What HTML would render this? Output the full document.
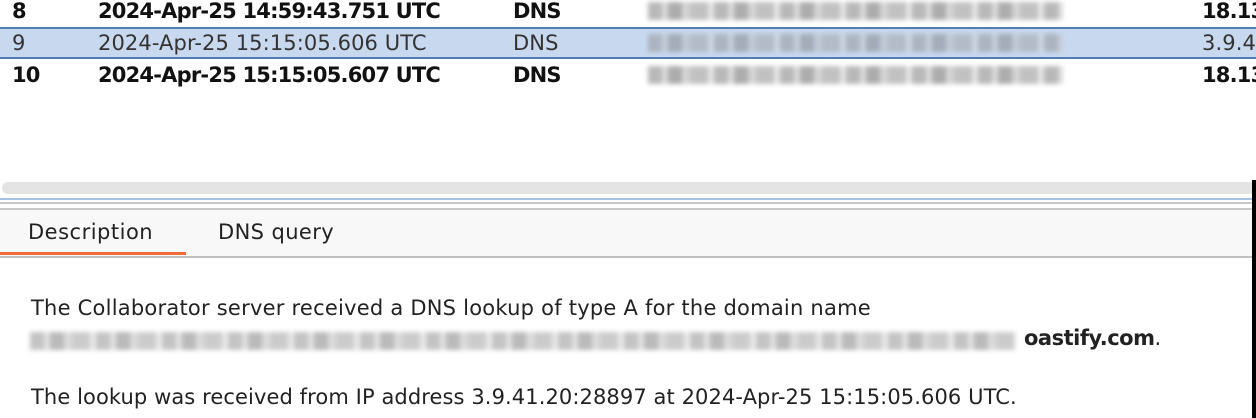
<!DOCTYPE html>
<html><head><style>
body{margin:0;width:1256px;height:418px;overflow:hidden;background:#fff;font-family:"DejaVu Sans","Liberation Sans",sans-serif;color:#111;position:relative}
.a{position:absolute;white-space:nowrap}
.row{position:absolute;left:0;width:1256px;height:31px;font-size:21px;line-height:31px;overflow:hidden}
.b{font-weight:bold;letter-spacing:-0.8px}
.n{letter-spacing:0.1px;color:#333}
.blur{position:absolute;background:repeating-linear-gradient(90deg,#8a8a8a 0 14px,#c4c4c4 14px 20px,#777 20px 34px,#b8b8b8 34px 42px,#999 42px 60px,#d4d4d4 60px 66px);filter:blur(2.5px);opacity:.6}
.t{font-size:21px;color:#222;letter-spacing:0.1px}
</style></head><body>
<div class="row b" style="top:-4px"><span class="a" style="left:12px">8</span><span class="a" style="left:98px">2024-Apr-25 14:59:43.751 UTC</span><span class="a" style="left:513px">DNS</span><span class="a" style="left:1202px">18.13</span></div>
<div class="row n" style="top:27px;height:32px;background:#c8d8ee;border-top:2px solid #4f7db4;border-bottom:2px solid #4f7db4;box-sizing:border-box;line-height:28px"><span class="a" style="left:12px">9</span><span class="a" style="left:98px">2024-Apr-25 15:15:05.606 UTC</span><span class="a" style="left:513px">DNS</span><span class="a" style="left:1202px">3.9.4</span></div>
<div class="row b" style="top:60px"><span class="a" style="left:12px">10</span><span class="a" style="left:98px">2024-Apr-25 15:15:05.607 UTC</span><span class="a" style="left:513px">DNS</span><span class="a" style="left:1202px">18.13</span></div>
<div class="blur" style="left:648px;top:2px;width:415px;height:18px"></div>
<div class="blur" style="left:648px;top:34px;width:415px;height:18px;opacity:.45"></div>
<div class="blur" style="left:648px;top:66px;width:415px;height:18px"></div>
<div class="a" style="left:2px;top:182px;width:1254px;height:12px;background:#e4e4e4;border-radius:6px"></div>
<div class="a" style="left:0;top:198px;width:1256px;height:2px;background:#a8c4e4"></div>
<div class="a" style="left:0;top:202px;width:1256px;height:2px;background:#c8c8c8"></div>
<div class="a" style="left:0;top:208px;width:1256px;height:2px;background:#c8c8c8"></div>
<div class="a" style="left:0;top:210px;width:1256px;height:46px;background:#f8f8f8;border-bottom:2px solid #c0c0c0"></div>
<div class="a t" style="left:28px;top:220px;letter-spacing:0.5px">Description</div>
<div class="a t" style="left:218px;top:220px;letter-spacing:0.4px">DNS query</div>
<div class="a" style="left:0;top:252px;width:186px;height:3px;background:#f26b3a"></div>
<div class="a t" style="left:31px;top:296px;letter-spacing:0.23px">The Collaborator server received a DNS lookup of type A for the domain name</div>
<div class="blur" style="left:30px;top:332px;width:986px;height:18px;opacity:.5"></div>
<div class="a t" style="left:1024px;top:326px;letter-spacing:-0.5px"><b>oastify.com</b>.</div>
<div class="a t" style="left:31px;top:385px;letter-spacing:0.09px">The lookup was received from IP address 3.9.41.20:28897 at 2024-Apr-25 15:15:05.606 UTC.</div>
<div class="a" style="left:1252px;top:180px;width:4px;height:238px;background:#000"></div>
</body></html>
